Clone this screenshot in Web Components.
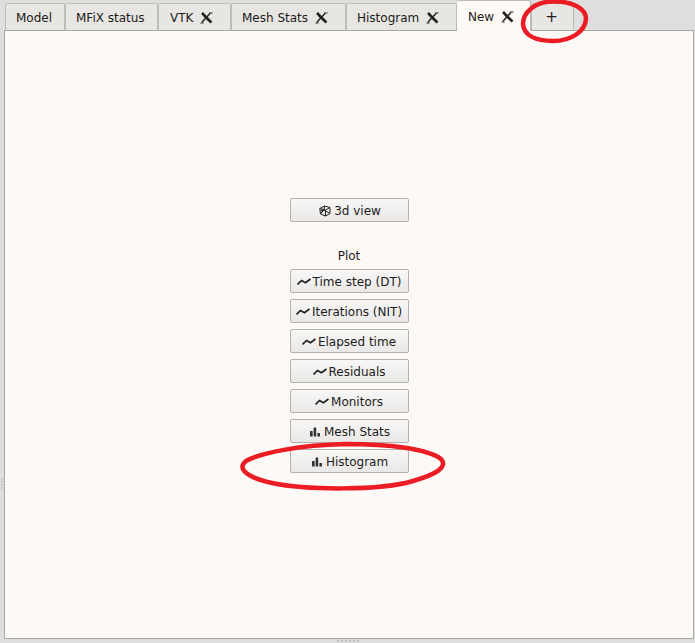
<!DOCTYPE html>
<html><head><meta charset="utf-8">
<style>
html,body{margin:0;padding:0;height:100%;background:#dedede;overflow:hidden}
body{font:12px/14px "DejaVu Sans",sans-serif;color:#1c1c1c}
</style></head>
<body>
<template id="x-icon"><svg width="13" height="12" viewBox="0 0 13 12" style="display:block"><path d="M2 1 C4 3 8 7.5 11.5 10.5" stroke="#222" stroke-width="2.6" fill="none"/><path d="M10 1.5 C7.5 4 5 7 2 10.2" stroke="#222" stroke-width="1.5" fill="none"/><path d="M0.5 11 L3.5 11 M9 1 L12.5 1" stroke="#222" stroke-width="1"/></svg></template>
<app-window>
  <tab-bar slot="tabs">
    <tab-item w="60">Model</tab-item>
    <tab-item w="93">MFiX status</tab-item>
    <tab-item w="73" closable pad="11">VTK</tab-item>
    <tab-item w="115" closable>Mesh Stats</tab-item>
    <tab-item w="111" closable>Histogram</tab-item>
    <tab-item w="74" closable active>New</tab-item>
    <tab-item w="43" plus>+</tab-item>
  </tab-bar>
  <new-panel slot="panel">
    <plot-button icon="cube">3d view</plot-button>
    <span class="label" style="margin:27px 0 6px">Plot</span>
    <div style="display:flex;flex-direction:column;gap:6px">
      <plot-button icon="line">Time step (DT)</plot-button>
      <plot-button icon="line">Iterations (NIT)</plot-button>
      <plot-button icon="line">Elapsed time</plot-button>
      <plot-button icon="line">Residuals</plot-button>
      <plot-button icon="line">Monitors</plot-button>
      <plot-button icon="bars">Mesh Stats</plot-button>
      <plot-button icon="bars">Histogram</plot-button>
    </div>
  </new-panel>
</app-window>
<script>
class AppWindow extends HTMLElement{constructor(){super();this.attachShadow({mode:'open'}).innerHTML=`<style>
:host{display:flex;flex-direction:column;position:relative;width:695px;height:643px;box-sizing:border-box;background:#dedede}
.grip-b{display:flex;justify-content:center;gap:2px;height:4px;align-items:center}
.grip-b i{width:2px;height:2px;background:#c4c4c4}
.grip-l{position:absolute;left:1px;top:478px;display:flex;flex-direction:column;gap:1px}
.grip-l i{width:2px;height:2px;background:#c8c8c8}
svg{position:absolute;left:0;top:0;pointer-events:none;z-index:2}
</style>
<slot name="tabs"></slot><slot name="panel"></slot>
<div class="grip-b"><i></i><i></i><i></i><i></i><i></i><i></i></div>
<div class="grip-l"><i></i><i></i><i></i><i></i></div>
<svg width="695" height="643" fill="none" stroke="#ec1c24" stroke-width="4.5">
<path d="M345 444 C300 445 260 453 246 461 C237 468 245 477 272 483 C305 490 380 491 413 481 C437 474 448 467 441 459 C428 449 390 444 345 444Z"/>
<path d="M552 1.5 C535 2 523 12 523 24 C524 35 535 41 553 41 C572 41 585 31 586 19 C586 8 572 1 552 1.5Z"/>
</svg>`}}
customElements.define('app-window',AppWindow);

class TabBar extends HTMLElement{constructor(){super();this.attachShadow({mode:'open'}).innerHTML=`<style>
:host{display:flex;height:31px;padding-left:5px;box-sizing:border-box;position:relative;z-index:1;align-items:flex-end}
</style><slot></slot>`}}
customElements.define('tab-bar',TabBar);

class TabItem extends HTMLElement{connectedCallback(){
 const r=this.attachShadow({mode:'open'});
 const act=this.hasAttribute('active'),plus=this.hasAttribute('plus');
 const pad=this.getAttribute('pad')||(act?11:10);
 r.innerHTML=`<style>
:host{display:flex;box-sizing:border-box;width:${this.getAttribute('w')}px;height:${act?31:28}px;
 background:${act?'#fdf9f6':'#e8e6e3'};border:1px solid #bdbbb8;border-left-width:${act?0:1}px;border-bottom:${act?'0':'1px solid #a9a7a4'};
 border-radius:2px 2px 0 0;align-items:center;padding-left:${plus?0:pad}px;padding-right:${plus?2:0}px;justify-content:${plus?'center':'flex-start'};gap:7px;
 padding-top:${act?1:0}px;${plus?'font-size:15px;padding-bottom:1px;':(act?'padding-bottom:0;':'padding-top:2px;')}}
svg{flex:none}
</style><slot></slot>`;
 if(this.hasAttribute('closable')) r.appendChild(document.getElementById('x-icon').content.cloneNode(true));
}}
customElements.define('tab-item',TabItem);

class NewPanel extends HTMLElement{constructor(){super();this.attachShadow({mode:'open'}).innerHTML=`<style>
:host{display:flex;flex-direction:column;align-items:center;box-sizing:border-box;width:690px;height:609px;margin-left:4px;margin-top:-1px;
 background:#fdf9f6;border:1px solid #a9a7a4;padding-top:167px}
::slotted(.label){display:block}
</style><slot></slot>`}}
customElements.define('new-panel',NewPanel);

const ICONS={
cube:`<svg width="12" height="12" viewBox="0 0 12 12" fill="none" stroke="#222" stroke-width="1" style="margin-right:1px"><path d="M0.8 3.5 L5.5 1 L11 2.5 L11 8.5 L6.5 11 L1.5 9Z"/><path d="M0.8 3.5 L6.5 5 L11 2.5 M6.5 5 L6.5 11 M5.5 1 L5 5 L1.5 9 M5 5 L11 8.5"/><path d="M2 4.3 L5 5.2 L2.5 8Z" fill="#222" stroke="none"/></svg>`,
line:`<svg width="14" height="12" viewBox="0 0 14 12" fill="none" stroke="#222" stroke-width="1.7"><path d="M0.5 8.5 L4.5 4.5 L8.5 6.8 L13.5 3"/></svg>`,
bars:`<svg width="10" height="12" viewBox="0 0 10 12" fill="#333" style="margin-right:2px"><rect x="0" y="5" width="2.6" height="5.5" rx=".5"/><rect x="3.6" y="1.5" width="2.6" height="9" rx=".5"/><rect x="7.4" y="7" width="2.6" height="3.5" rx=".5"/></svg>`};
class PlotButton extends HTMLElement{connectedCallback(){
 const ic=this.getAttribute('icon');
 this.attachShadow({mode:'open'}).innerHTML=`<style>
:host{display:flex;box-sizing:border-box;width:119px;height:24px;align-items:center;justify-content:center;gap:2px;
 padding-top:1px;padding-left:${ic==='line'?0:2}px;
 border:1px solid #b4b2af;border-radius:2px;background:linear-gradient(#f8f7f6,#e9e8e6)}
svg{flex:none}
</style>${ICONS[ic]}<slot></slot>`;
}}
customElements.define('plot-button',PlotButton);
</script>
</body></html>
